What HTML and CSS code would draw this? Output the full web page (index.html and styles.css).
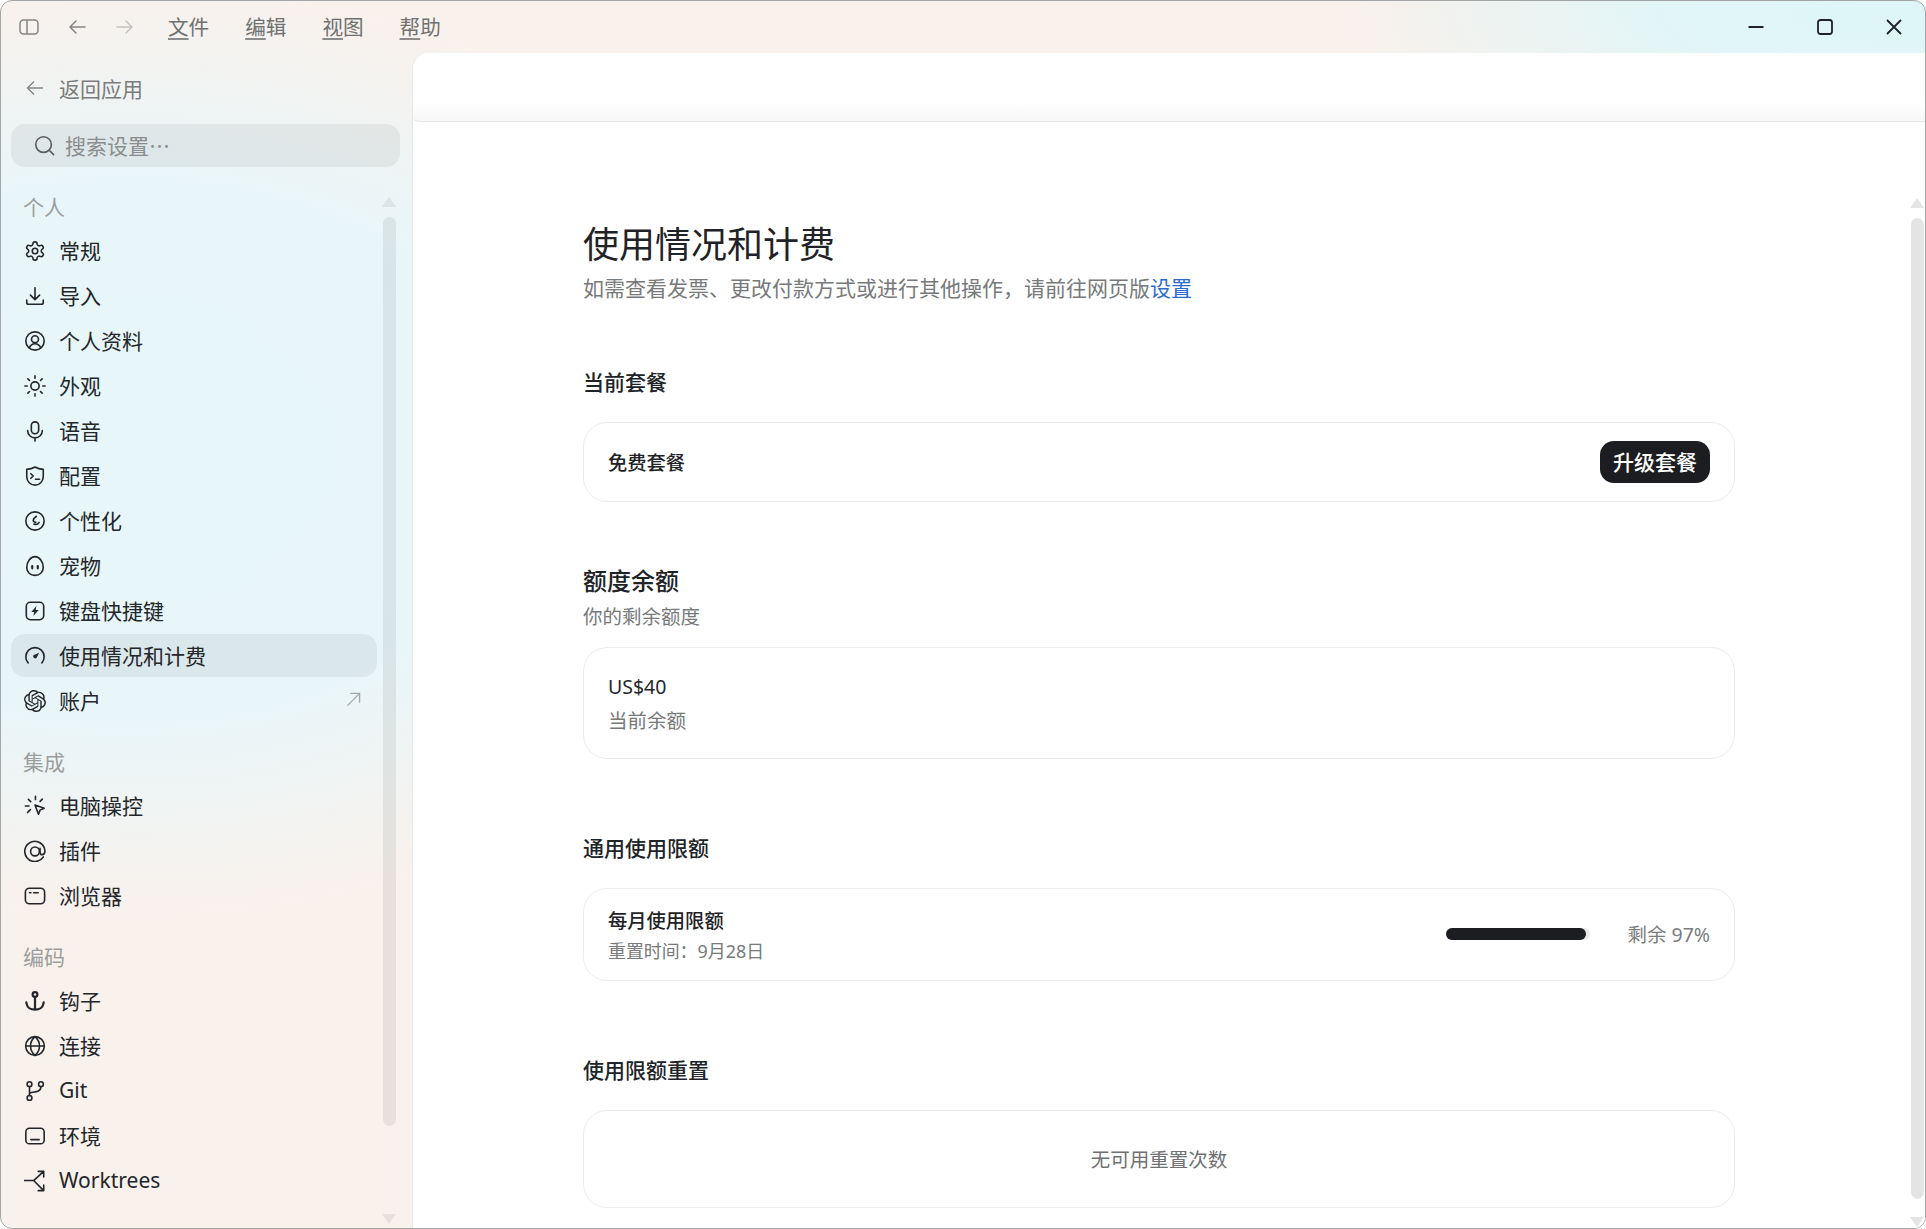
FILE: index.html
```html
<!DOCTYPE html>
<html lang="zh-CN">
<head>
<meta charset="utf-8">
<title>使用情况和计费</title>
<link rel="stylesheet" href="styles.css">
</head>
<body>
<div class="window">
  <header class="titlebar">
    <div class="tb-left">
      <svg class="tb-icon toggle" viewBox="0 0 20 16"><rect x="1" y="1" width="18" height="14" rx="3.5"/><path d="M8 1v14"/></svg>
      <svg class="tb-icon arrow" viewBox="0 0 18 16"><path d="M17 8H2M8 2 2 8l6 6"/></svg>
      <svg class="tb-icon arrow disabled" viewBox="0 0 18 16"><path d="M1 8h15M10 2l6 6-6 6"/></svg>
      <nav class="menu">
        <span class="menu-item"><u>文</u>件</span>
        <span class="menu-item"><u>编</u>辑</span>
        <span class="menu-item"><u>视</u>图</span>
        <span class="menu-item"><u>帮</u>助</span>
      </nav>
    </div>
    <div class="win-controls">
      <svg class="win-icon" viewBox="0 0 16 16"><path d="M0.5 8h15"/></svg>
      <svg class="win-icon" viewBox="0 0 16 16"><rect x="1" y="1" width="14" height="14" rx="2.5"/></svg>
      <svg class="win-icon" viewBox="0 0 16 16"><path d="M1 1l14 14M15 1 1 15"/></svg>
    </div>
  </header>

  <div class="workspace">
    <aside class="sidebar">
      <div class="back-row">
        <svg class="back-icon" viewBox="0 0 18 16"><path d="M17 8H2M8 2 2 8l6 6"/></svg>
        <span>返回应用</span>
      </div>
      <div class="search">
        <svg class="search-icon" viewBox="0 0 22 22"><circle cx="10" cy="10" r="8.2"/><path d="m16 16 4.5 4.5"/></svg>
        <span>搜索设置⋯</span>
      </div>
      <div class="side-body">
        <nav class="side-nav">
          <section class="side-section">
            <h3 class="side-label">个人</h3>
            <a class="nav-item"><svg class="nav-icon" viewBox="0 0 24 24"><path d="M12.22 2h-.44a2 2 0 0 0-2 2v.18a2 2 0 0 1-1 1.73l-.43.25a2 2 0 0 1-2 0l-.15-.08a2 2 0 0 0-2.73.73l-.22.38a2 2 0 0 0 .73 2.73l.15.1a2 2 0 0 1 1 1.72v.51a2 2 0 0 1-1 1.74l-.15.09a2 2 0 0 0-.73 2.73l.22.38a2 2 0 0 0 2.73.73l.15-.08a2 2 0 0 1 2 0l.43.25a2 2 0 0 1 1 1.73V20a2 2 0 0 0 2 2h.44a2 2 0 0 0 2-2v-.18a2 2 0 0 1 1-1.73l.43-.25a2 2 0 0 1 2 0l.15.08a2 2 0 0 0 2.73-.73l.22-.39a2 2 0 0 0-.73-2.73l-.15-.08a2 2 0 0 1-1-1.74v-.5a2 2 0 0 1 1-1.74l.15-.09a2 2 0 0 0 .73-2.73l-.22-.38a2 2 0 0 0-2.73-.73l-.15.08a2 2 0 0 1-2 0l-.43-.25a2 2 0 0 1-1-1.73V4a2 2 0 0 0-2-2z"/><circle cx="12" cy="12" r="3"/></svg><span>常规</span></a>
            <a class="nav-item"><svg class="nav-icon" viewBox="0 0 24 24"><path d="M12 3v12.500M7 11l5 5 5-5M3 16.500v2.500a2 2 0 0 0 2 2h14a2 2 0 0 0 2-2v-2.500"/></svg><span>导入</span></a>
            <a class="nav-item"><svg class="nav-icon" viewBox="0 0 24 24"><circle cx="12" cy="12" r="10"/><circle cx="12" cy="10" r="3.800"/><path d="M5.800 19.500c1.200-3 3.400-4.500 6.200-4.500s5 1.500 6.200 4.500"/></svg><span>个人资料</span></a>
            <a class="nav-item"><svg class="nav-icon" viewBox="0 0 24 24"><circle cx="12" cy="12" r="4.500"/><path d="M12 1v2.500M12 20.500V23M1 12h2.500M20.500 12H23M4.200 4.200l1.800 1.800M18 18l1.800 1.800M4.200 19.800 6 18M18 6l1.800-1.800"/></svg><span>外观</span></a>
            <a class="nav-item"><svg class="nav-icon" viewBox="0 0 24 24"><rect x="8" y="2" width="8" height="13" rx="4"/><path d="M4 11.500a8 8 0 0 0 16 0M12 19.500V23"/></svg><span>语音</span></a>
            <a class="nav-item"><svg class="nav-icon" viewBox="0 0 24 24"><path d="M12 2.200c2.500 1.500 5 2.300 9 2.600v7.700c0 5.500-4.200 9.500-9 9.500s-9-4-9-9.500V4.800c4-.3 6.500-1.100 9-2.600z"/><path d="m7.500 9.500 2.500 2.500-2.500 2.500M12.500 15.500H17"/></svg><span>配置</span></a>
            <a class="nav-item"><svg class="nav-icon" viewBox="0 0 24 24"><circle cx="12" cy="12" r="10"/><path d="M13.500 6.800c-2 1.400-3.500 3-3.500 4.700 0 1.200 1.500 1.700 2.800 2M16.500 13.500c-1 1.700-3.500 2.700-5.700 1.800"/></svg><span>个性化</span></a>
            <a class="nav-item"><svg class="nav-icon" viewBox="0 0 24 24"><path d="M12 1.800c5 0 9 6 9 11.700 0 5.500-4 8.700-9 8.700s-9-3.200-9-8.700C3 7.800 7 1.800 12 1.800z"/><path class="bold" d="M9 12v2.500M15 12v2.500"/></svg><span>宠物</span></a>
            <a class="nav-item"><svg class="nav-icon" viewBox="0 0 24 24"><rect x="2.500" y="2.500" width="19" height="19" rx="4.500"/><path class="solid" d="M13.500 6.500 8 13h3.200l-1 4.500L16 11h-3.300z"/></svg><span>键盘快捷键</span></a>
            <a class="nav-item active"><svg class="nav-icon" viewBox="0 0 24 24"><path d="M4.500 19.500a10 10 0 1 1 15 0"/><path class="solid" d="M16.500 8.500 13.800 14a2.300 2.300 0 0 1-3.600-2.700z"/></svg><span>使用情况和计费</span></a>
            <a class="nav-item"><svg class="nav-icon logo" viewBox="0 0 24 24"><path d="M22.2819 9.8211a5.9847 5.9847 0 0 0-.5157-4.9108 6.0462 6.0462 0 0 0-6.5098-2.9A6.0651 6.0651 0 0 0 4.9807 4.1818a5.9847 5.9847 0 0 0-3.9977 2.9 6.0462 6.0462 0 0 0 .7427 7.0966 5.98 5.98 0 0 0 .511 4.9107 6.051 6.051 0 0 0 6.5146 2.9001A5.9847 5.9847 0 0 0 13.2599 24a6.0557 6.0557 0 0 0 5.7718-4.2058 5.9894 5.9894 0 0 0 3.9977-2.9001 6.0557 6.0557 0 0 0-.7475-7.0729zm-9.022 12.6081a4.4755 4.4755 0 0 1-2.8764-1.0408l.1419-.0804 4.7783-2.7582a.7948.7948 0 0 0 .3927-.6813v-6.7369l2.02 1.1686a.071.071 0 0 1 .038.052v5.5826a4.504 4.504 0 0 1-4.4945 4.4944zm-9.6607-4.1254a4.4708 4.4708 0 0 1-.5346-3.0137l.142.0852 4.783 2.7582a.7712.7712 0 0 0 .7806 0l5.8428-3.3685v2.3324a.0804.0804 0 0 1-.0332.0615L9.74 19.9502a4.4992 4.4992 0 0 1-6.1408-1.6464zM2.3408 7.8956a4.485 4.485 0 0 1 2.3655-1.9728V11.6a.7664.7664 0 0 0 .3879.6765l5.8144 3.3543-2.0201 1.1685a.0757.0757 0 0 1-.071 0l-4.8303-2.7865A4.504 4.504 0 0 1 2.3408 7.872zm16.5963 3.8558L13.1038 8.364 15.1192 7.2a.0757.0757 0 0 1 .071 0l4.8303 2.7913a4.4944 4.4944 0 0 1-.6765 8.1042v-5.6772a.79.79 0 0 0-.407-.667zm2.0107-3.0231l-.142-.0852-4.7735-2.7818a.7759.7759 0 0 0-.7854 0L9.409 9.2297V6.8974a.0662.0662 0 0 1 .0284-.0615l4.8303-2.7866a4.4992 4.4992 0 0 1 6.6802 4.66zM8.3065 12.863l-2.02-1.1638a.0804.0804 0 0 1-.038-.0567V6.0742a4.4992 4.4992 0 0 1 7.3757-3.4537l-.142.0805L8.704 5.459a.7948.7948 0 0 0-.3927.6813zm1.0976-2.3654l2.602-1.4998 2.6069 1.4998v2.9994l-2.5974 1.4997-2.6067-1.4997Z"/></svg><span>账户</span><svg class="ext-icon" viewBox="0 0 16 16"><path d="M1.500 14.500 14.500 1.500M4.500 1.500h10v10"/></svg></a>
          </section>
          <section class="side-section">
            <h3 class="side-label">集成</h3>
            <a class="nav-item"><svg class="nav-icon" viewBox="0 0 24 24"><path d="m12 11 10 3.500-4.500 2-1.700 4.500z"/><path d="M12.500 1.500v3.500M4.800 4.800l2.500 2.500M20 4.500 17.500 7M1.500 12h4M7 16l-3 3"/></svg><span>电脑操控</span></a>
            <a class="nav-item"><svg class="nav-icon" viewBox="0 0 24 24"><path d="M21 18.500a11 11 0 1 1 1.800-6.500c0 2.500-1 4-2.800 4-1.500 0-2.500-1-2.500-2.500V9"/><circle cx="12" cy="12.500" r="4.800"/></svg><span>插件</span></a>
            <a class="nav-item"><svg class="nav-icon" viewBox="0 0 24 24"><rect x="1.500" y="3.500" width="21" height="17" rx="4.500"/><path d="M6 8.500h1.500M10.500 8.500h5"/></svg><span>浏览器</span></a>
          </section>
          <section class="side-section">
            <h3 class="side-label">编码</h3>
            <a class="nav-item"><svg class="nav-icon bold" viewBox="0 0 24 24"><circle cx="12" cy="5" r="2.600"/><path d="M12 7.600v13.900M2.500 13.500l.5 2c.5 3.500 4 6 9 6s8.500-2.500 9-6l.5-2"/></svg><span>钩子</span></a>
            <a class="nav-item"><svg class="nav-icon" viewBox="0 0 24 24"><circle cx="12" cy="12" r="10.200"/><path d="M1.800 12h20.400M12 1.800c-6.500 5.500-6.500 15 0 20.400 6.500-5.400 6.500-14.900 0-20.400z"/></svg><span>连接</span></a>
            <a class="nav-item"><svg class="nav-icon" viewBox="0 0 24 24"><circle cx="6" cy="4.500" r="2.600"/><circle cx="6" cy="19.500" r="2.600"/><circle cx="18.500" cy="4.500" r="2.600"/><path d="M6 7.100v9.800M18.500 7.100c0 3.500-2.500 5.400-6 5.900-3 .4-5 .6-6.500 1.500"/></svg><span>Git</span></a>
            <a class="nav-item"><svg class="nav-icon" viewBox="0 0 24 24"><rect x="2" y="3.500" width="20" height="17" rx="4"/><path d="M7.500 16h9"/></svg><span>环境</span></a>
            <a class="nav-item"><svg class="nav-icon" viewBox="0 0 24 24"><path d="M0.500 11.500h10l11-10M15.500 1.500h6v6M10.500 11.500l11 11M21.500 16.500v6h-6"/></svg><span>Worktrees</span></a>
          </section>
        </nav>
        <div class="scrollbar side-scroll">
          <i class="arrow-up"></i>
          <i class="thumb"></i>
          <i class="arrow-down"></i>
        </div>
      </div>
    </aside>

    <main class="main">
      <div class="main-head"></div>
      <div class="main-body">
        <div class="content">
          <h1 class="page-title">使用情况和计费</h1>
          <p class="page-sub">如需查看发票、更改付款方式或进行其他操作，请前往网页版<a class="link">设置</a></p>

          <h2 class="sec-title plan-title">当前套餐</h2>
          <div class="card plan-card">
            <strong class="card-name">免费套餐</strong>
            <button class="btn">升级套餐</button>
          </div>

          <h2 class="sec-title-lg">额度余额</h2>
          <p class="sec-sub">你的剩余额度</p>
          <div class="card balance-card">
            <div class="stack">
              <span class="amount">US$40</span>
              <span class="amount-sub">当前余额</span>
            </div>
          </div>

          <h2 class="sec-title limit-title">通用使用限额</h2>
          <div class="card limit-card">
            <div class="stack-tight">
              <strong class="card-name">每月使用限额</strong>
              <span class="reset">重置时间：9月28日</span>
            </div>
            <div class="meter">
              <div class="track"><div class="fill"></div></div>
              <span class="meter-text">剩余 97%</span>
            </div>
          </div>

          <h2 class="sec-title limit-title">使用限额重置</h2>
          <div class="card empty-card">无可用重置次数</div>
        </div>
        <div class="scrollbar main-scroll">
          <i class="arrow-up"></i>
          <i class="thumb"></i>
          <i class="arrow-down"></i>
        </div>
      </div>
    </main>
  </div>
</div>
</body>
</html>
```
FILE: styles.css
```css
* { box-sizing: border-box; }
html, body { margin: 0; height: 100%; background: #fff; overflow: hidden; }
body { font-family: "Noto Sans", "Noto Sans CJK SC", sans-serif; color: #1f2226; }
h1, h2, h3, p { margin: 0; font-weight: 400; }

.window {
  width: 1926px; height: 1229px;
  border: 1px solid #a3a6a6;
  border-radius: 12px;
  overflow: hidden;
  display: flex; flex-direction: column;
  background:
    radial-gradient(ellipse 700px 470px at 130px 450px, #e7f6fa 0%, #e8f6f9 55%, rgba(232,246,249,0) 100%),
    radial-gradient(ellipse 560px 170px at 1900px 10px, #def6f8 0%, rgba(222,246,248,.9) 40%, rgba(222,246,248,0) 100%),
    #f9f1ec;
}

/* title bar */
.titlebar { height: 52px; flex: none; display: flex; justify-content: space-between; align-items: center; }
.tb-left { display: flex; align-items: center; padding-left: 18px; }
.tb-icon { fill: none; stroke: #858585; stroke-width: 1.5; }
.toggle { width: 20px; height: 16px; }
.arrow { width: 18px; height: 16px; margin-left: 29px; stroke-linecap: round; stroke-linejoin: round; }
.arrow + .arrow { margin-left: 30px; }
.arrow.disabled { stroke: #c3c3c0; }
.menu { display: flex; gap: 36px; margin-left: 34px; color: #6f7170; font-size: 20.6px; line-height: 30px; }
.menu-item u { text-decoration-thickness: 2px; text-underline-offset: 3px; text-decoration-color: #8b8b8b; }
.win-controls { display: flex; gap: 53px; padding-right: 23px; }
.win-icon { width: 16px; height: 16px; fill: none; stroke: #202226; stroke-width: 1.8; }

.workspace { flex: 1; min-height: 0; display: grid; grid-template-columns: 411px 1fr; }

/* sidebar */
.sidebar { display: flex; flex-direction: column; min-height: 0; }
.back-row { display: flex; align-items: center; margin-top: 13px; height: 43px; padding-left: 24px; gap: 15px; color: #7b7c7b; font-size: 21px; }
.back-icon { width: 19px; height: 16px; fill: none; stroke: #85888a; stroke-width: 1.5; stroke-linecap: round; stroke-linejoin: round; }
.search { display: flex; align-items: center; margin: 15px 12px 0 10px; height: 43px; border-radius: 14px; background: rgba(60,70,70,.075); padding: 0 0 2px 23px; gap: 10px; color: #8a8d8d; font-size: 21px; }
.search-icon { width: 21px; height: 21px; margin-top: 2px; fill: none; stroke: #5a5d5e; stroke-width: 1.7; stroke-linecap: round; }
.side-body { flex: 1; min-height: 0; display: flex; }
.side-nav { width: 376px; padding-left: 10px; }
.side-section { margin-top: 20px; }
.side-label { height: 40px; line-height: 40px; padding-left: 12px; margin-bottom: 2px; color: #9c9e9e; font-size: 21px; }
.nav-item { display: flex; align-items: center; height: 43px; margin-bottom: 2px; padding: 0 16px 2px 13px; gap: 15px; border-radius: 14px; font-size: 21px; color: #23262a; }
.nav-item.active { background: rgba(60,70,70,.075); }
.nav-icon { width: 22px; height: 22px; margin: 2px -2px 0 0; flex: none; fill: none; stroke: #23262a; stroke-width: 1.75; stroke-linecap: round; stroke-linejoin: round; }
.nav-icon .bold, .nav-icon.bold { stroke-width: 2.4; }
.nav-icon .solid { fill: #23262a; stroke: none; }
.nav-icon.logo { fill: #23262a; stroke: none; }
.ext-icon { width: 15px; height: 15px; margin-left: auto; fill: none; stroke: #a5a7a7; stroke-width: 1.4; }

/* scrollbars */
.scrollbar { display: flex; flex-direction: column; align-items: center; width: 14px; flex: none; }
.scrollbar i { display: block; flex: none; }
.arrow-up, .arrow-down { width: 14px; height: 10px; }
.arrow-up { clip-path: polygon(50% 0, 100% 100%, 0 100%); }
.arrow-down { clip-path: polygon(0 0, 100% 0, 50% 100%); }
.thumb { width: 13px; border-radius: 7px; }
.side-scroll { margin-left: 5px; padding-top: 30px; }
.side-scroll i { background: rgba(60,70,70,.09); }
.side-scroll .thumb { height: 909px; margin: 10px 0 88px; }
.main-scroll { margin: 0 1px 0 6px; padding-top: 76px; }
.main-scroll i { background: #e4e4e4; }
.main-scroll .thumb { height: 981px; margin: 10px 0 18px; }

/* main */
.main { min-width: 0; min-height: 0; display: flex; flex-direction: column; background: #fff; border-top-left-radius: 16px; border-left: 1px solid #e3e8e8; }
.main-head { height: 69px; flex: none; border-bottom: 1px solid #e6e6e6; background: linear-gradient(#fff 72%, #f7f7f7); border-top-left-radius: 16px; border-bottom-left-radius: 6px; }
.main-body { flex: 1; min-height: 0; display: flex; overflow: hidden; }
.content { flex: 1; min-width: 0; padding: 100px 169px 0 170px; }
.page-title { font-size: 36px; line-height: 46px; color: #1f2226; }
.page-sub { margin-top: 6px; padding-bottom: 2px; font-size: 21px; line-height: 28px; color: #77797b; }
.link { color: #2b6ad0; }
.sec-title { padding-bottom: 2px; font-size: 21px; line-height: 28px; font-weight: 500; color: #202327; }
.plan-title { margin-top: 64px; }
.limit-title { margin-top: 75px; }
.sec-title-lg { margin-top: 61px; font-size: 24px; line-height: 36px; font-weight: 500; }
.sec-sub { margin-top: 4px; font-size: 19.5px; line-height: 28px; color: #77797b; }

.card { border: 1px solid #ececec; border-radius: 24px; display: flex; justify-content: space-between; align-items: center; padding: 0 24px; }
.plan-card { margin-top: 24px; height: 80px; }
.balance-card { margin-top: 16px; height: 112px; }
.limit-card { margin-top: 24px; height: 93px; }
.empty-card { margin-top: 24px; height: 98px; padding-bottom: 2px; justify-content: center; font-size: 19.5px; color: #6f7173; }
.card-name { font-size: 19.3px; font-weight: 500; color: #1f2226; }
.btn { height: 42px; width: 110px; border: 0; border-radius: 14px; background: #1c1d21; color: #fff; font: 500 21px "Noto Sans", "Noto Sans CJK SC", sans-serif; padding: 0 0 2px; }
.stack { display: flex; flex-direction: column; padding-top: 2px; }
.amount { font-size: 19.5px; line-height: 34px; color: #23262a; }
.amount-sub { font-size: 19.5px; line-height: 34px; color: #77797b; }
.stack-tight { display: flex; flex-direction: column; padding-top: 2px; }
.stack-tight .card-name { line-height: 31px; }
.reset { font-size: 17.92px; line-height: 31px; color: #77797b; }
.meter { display: flex; align-items: center; gap: 37px; padding-bottom: 2px; }
.track { width: 144px; height: 12px; border-radius: 6px; background: #e8e8e8; }
.fill { width: 97%; height: 100%; border-radius: 6px; background: #1c1d21; }
.meter-text { font-size: 19.5px; color: #7b7c7e; }
```
